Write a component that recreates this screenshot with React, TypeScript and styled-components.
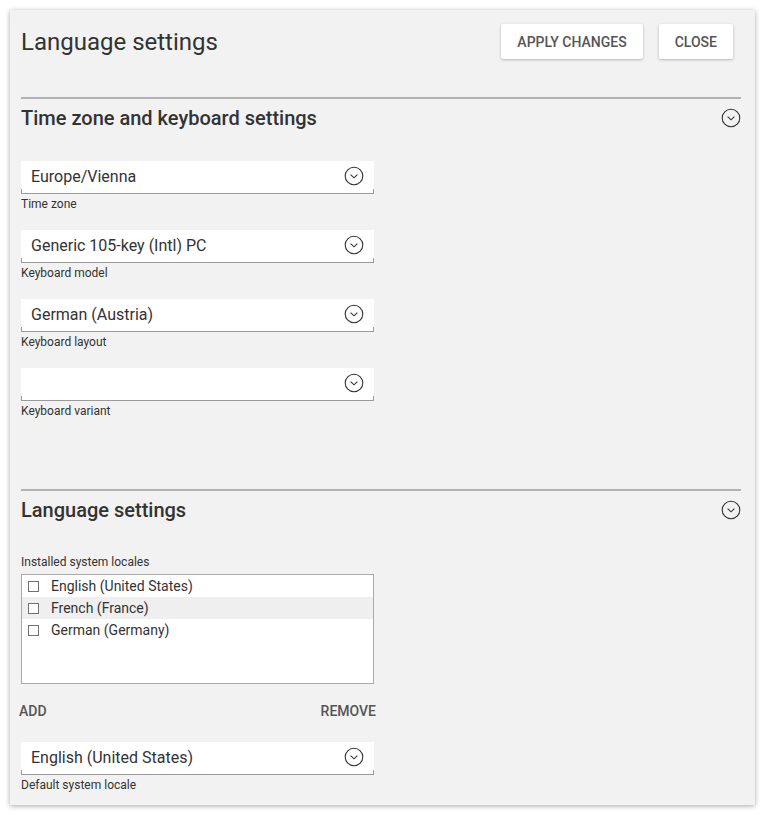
import React from "react";
import styled, { createGlobalStyle } from "styled-components";

const Global = createGlobalStyle`
  html, body { margin: 0; padding: 0; background: #ffffff; }
  body { font-family: Roboto, "Liberation Sans", Arial, sans-serif; color: #333; }
  * { box-sizing: border-box; }
`;

const Page = styled.div`
  padding: 10px 10px 10px 10px;
  width: 765px;
`;

const Panel = styled.div`
  width: 745px;
  height: 795px;
  background: #f2f2f2;
  box-shadow: 0 1px 5px rgba(0, 0, 0, 0.35);
  padding: 14px 14px 0 11px;
`;

const Header = styled.div`
  display: flex;
  align-items: flex-start;
  height: 73px;
`;

const Title = styled.h1`
  margin: 0;
  flex: 1;
  font-size: 24px;
  font-weight: 400;
  color: #333;
  line-height: 36px;
  padding-top: 0;
`;

const Buttons = styled.div`
  display: flex;
  gap: 16px;
  margin-right: 8px;
`;

const RaisedButton = styled.button`
  height: 35px;
  padding: 0 16px;
  border: none;
  background: #fff;
  border-radius: 2px;
  box-shadow: 0 1px 3px rgba(0, 0, 0, 0.25);
  font-family: Roboto, "Liberation Sans", Arial, sans-serif;
  font-size: 14px;
  font-weight: 500;
  color: #555;
  letter-spacing: 0;
`;

const Section = styled.section<{ $height: number }>`
  border-top: 2px solid #b3b3b3;
  height: ${(p) => p.$height}px;
`;

const SectionHead = styled.div`
  display: flex;
  align-items: center;
  justify-content: space-between;
  height: 38px;
  padding-top: 0;
`;

const SectionTitle = styled.h2`
  margin: 0;
  font-size: 20px;
  font-weight: 500;
  color: #333;
`;

const Fields = styled.div<{ $top: number }>`
  display: flex;
  flex-direction: column;
  gap: 17px;
  padding-top: ${(p) => p.$top}px;
  width: 353px;
`;

const Field = styled.div`
  display: flex;
  flex-direction: column;
`;

const SelectBox = styled.div`
  position: relative;
  height: 33px;
  background: #fff;
  display: flex;
  align-items: center;
  padding: 0 10px 2px 10px;
  border-bottom: 1px solid #9a9a9a;
  &::before,
  &::after {
    content: "";
    position: absolute;
    bottom: 0;
    width: 1px;
    height: 4px;
    background: #9a9a9a;
  }
  &::before { left: 0; }
  &::after { right: 0; }
`;

const SelectValue = styled.span`
  flex: 1;
  font-size: 16px;
  color: #333;
`;

const Caption = styled.span`
  font-size: 12px;
  color: #333;
  line-height: 17px;
  margin-top: 2px;
`;

const ListLabel = styled.div`
  font-size: 12px;
  color: #333;
  line-height: 17px;
  margin-top: 25px;
  margin-bottom: 3px;
`;

const ListBox = styled.div`
  width: 353px;
  height: 110px;
  background: #fff;
  border: 1px solid #aaa;
  padding-top: 0;
`;

const ListRow = styled.div<{ $hl?: boolean }>`
  height: 22px;
  display: flex;
  align-items: center;
  padding-left: 6px;
  background: ${(p) => (p.$hl ? "#efefef" : "transparent")};
  font-size: 14px;
  color: #333;
`;

const Check = styled.span`
  width: 11px;
  height: 11px;
  border: 1px solid #707070;
  margin-right: 12px;
  background: #fff;
`;

const FlatRow = styled.div`
  width: 357px;
  margin-left: -2px;
  display: flex;
  justify-content: space-between;
  margin-top: 19px;
  margin-bottom: 23px;
`;

const FlatButton = styled.button`
  border: none;
  background: transparent;
  padding: 0;
  font-family: Roboto, "Liberation Sans", Arial, sans-serif;
  font-size: 14px;
  font-weight: 500;
  color: #555;
  line-height: 16px;
`;

const ChevronCircle = ({ size = 20 }: { size?: number }) => (
  <svg width={size} height={size} viewBox="0 0 20 20" fill="none">
    <circle cx="10" cy="10" r="8.8" stroke="#333" strokeWidth="1.1" />
    <path d="M6.6 8.6 L10 11.8 L13.4 8.6" stroke="#333" strokeWidth="1.1" fill="none" />
  </svg>
);

const Select = ({ value, label }: { value: string; label: string }) => (
  <Field>
    <SelectBox>
      <SelectValue>{value}</SelectValue>
      <ChevronCircle />
    </SelectBox>
    <Caption>{label}</Caption>
  </Field>
);

export default function App() {
  return (
    <Page>
      <Global />
      <Panel>
        <Header>
          <Title>Language settings</Title>
          <Buttons>
            <RaisedButton>APPLY CHANGES</RaisedButton>
            <RaisedButton>CLOSE</RaisedButton>
          </Buttons>
        </Header>
        <Section $height={392}>
          <SectionHead>
            <SectionTitle>Time zone and keyboard settings</SectionTitle>
            <ChevronCircle />
          </SectionHead>
          <Fields $top={24}>
            <Select value="Europe/Vienna" label="Time zone" />
            <Select value="Generic 105-key (Intl) PC" label="Keyboard model" />
            <Select value="German (Austria)" label="Keyboard layout" />
            <Select value="" label="Keyboard variant" />
          </Fields>
        </Section>
        <Section $height={300}>
          <SectionHead>
            <SectionTitle>Language settings</SectionTitle>
            <ChevronCircle />
          </SectionHead>
          <ListLabel>Installed system locales</ListLabel>
          <ListBox>
            <ListRow>
              <Check />
              English (United States)
            </ListRow>
            <ListRow $hl>
              <Check />
              French (France)
            </ListRow>
            <ListRow>
              <Check />
              German (Germany)
            </ListRow>
          </ListBox>
          <FlatRow>
            <FlatButton>ADD</FlatButton>
            <FlatButton>REMOVE</FlatButton>
          </FlatRow>
          <Fields $top={0}>
            <Select value="English (United States)" label="Default system locale" />
          </Fields>
        </Section>
      </Panel>
    </Page>
  );
}
